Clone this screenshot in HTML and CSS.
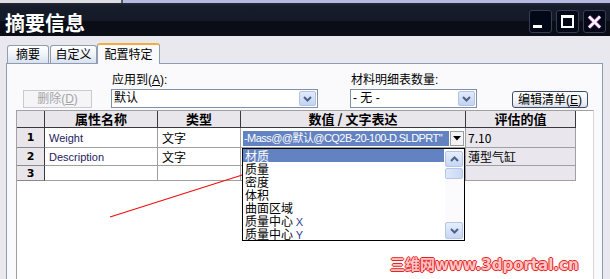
FILE: index.html
```html
<!DOCTYPE html>
<html lang="zh-CN">
<head>
    <meta charset="UTF-8">
    <title>摘要信息</title>
    <link rel="stylesheet" href="styles.css">
</head>
<body>
<div class="strip"><span class="strip-l"></span></div>
<div class="titlebar">
    <h1 class="title">摘要信息</h1>
    <div class="tb-btns">
        <span class="tb-btn min"><i class="ico-min"></i></span>
        <span class="tb-btn"><i class="ico-max"></i></span>
        <span class="tb-btn">
            <svg width="15" height="14" viewBox="0 0 15 14">
                <path d="M2 1.5L13 12.5M13 1.5L2 12.5" stroke="#c36bc8" stroke-width="3.6" fill="none"/>
                <path d="M2 1.5L13 12.5M13 1.5L2 12.5" stroke="#fff" stroke-width="2.4" fill="none"/>
            </svg>
        </span>
    </div>
</div>
<div class="tabs">
    <span class="tab t1">摘要</span>
    <span class="tab t2">自定义</span>
    <span class="tab t3 on">配置特定</span>
</div>
<div class="panel">
    <div class="opts">
        <button class="btn del" disabled>删除(<u>D</u>)</button>
        <div class="fld f1">
            <label>应用到(<u>A</u>):</label>
            <div class="combo"><span>默认</span><i class="drop"><svg width="9" height="6" viewBox="0 0 9 6"><path d="M1 1L4.5 4.5L8 1" stroke="#4d6185" stroke-width="2" fill="none"/></svg></i></div>
        </div>
        <div class="fld f2">
            <label>材料明细表数量:</label>
            <div class="combo"><span>- 无 -</span><i class="drop"><svg width="9" height="6" viewBox="0 0 9 6"><path d="M1 1L4.5 4.5L8 1" stroke="#4d6185" stroke-width="2" fill="none"/></svg></i></div>
        </div>
        <button class="btn edit">编辑清单(<u>E</u>)</button>
    </div>
    <div class="sheet">
        <div class="grid">
            <div class="hd"></div>
            <div class="hd">属性名称</div>
            <div class="hd">类型</div>
            <div class="hd">数值 / 文字表达</div>
            <div class="hd">评估的值</div>

            <div class="rh">1</div>
            <div class="c name">Weight</div>
            <div class="c">文字</div>
            <div class="c val">
                <div class="cell-combo">
                    <span class="sel">-Mass@@默认@CQ2B-20-100-D.SLDPRT"</span>
                    <i class="cell-drop"><svg width="8" height="5" viewBox="0 0 8 5"><path d="M0 0H8L4 4.5Z" fill="#000"/></svg></i>
                </div>
                <div class="list">
                    <ul class="items">
                        <li class="on">材质</li>
                        <li>质量</li>
                        <li>密度</li>
                        <li>体积</li>
                        <li>曲面区域</li>
                        <li>质量中心 <span class="ax">X</span></li>
                        <li>质量中心 <span class="ax">Y</span></li>
                    </ul>
                    <div class="vscroll">
                        <span class="sb-btn"><svg width="9" height="6" viewBox="0 0 9 6"><path d="M1 5L4.5 1.5L8 5" stroke="#4d6185" stroke-width="2" fill="none"/></svg></span>
                        <span class="sb-thumb"></span>
                        <span class="sb-btn down"><svg width="9" height="6" viewBox="0 0 9 6"><path d="M1 1L4.5 4.5L8 1" stroke="#4d6185" stroke-width="2" fill="none"/></svg></span>
                    </div>
                </div>
            </div>
            <div class="c ev">7.10</div>

            <div class="rh">2</div>
            <div class="c name">Description</div>
            <div class="c">文字</div>
            <div class="c"></div>
            <div class="c ev">薄型气缸</div>

            <div class="rh">3</div>
            <div class="c"></div>
            <div class="c"></div>
            <div class="c"></div>
            <div class="c ev"></div>
        </div>
    </div>
</div>

<svg class="arrow" width="610" height="279" viewBox="0 0 610 279">
    <path d="M110 217L247 173.5" stroke="#f01010" stroke-width="1.3" fill="none"/>
    <path d="M258 169L247.1 177.7L244.1 168.1Z" fill="#f01010"/>
</svg>
<div class="wm">三维网www.3dportal.cn</div>
</body>
</html>
```

FILE: styles.css
```css
body{
    margin: 0;
    width: 610px;
    height: 279px;
    overflow: hidden;
    position: relative;
    background: #e9e8ee;
    font-family: "Liberation Sans", "Noto Sans CJK SC", sans-serif;
    font-size: 12px;
    color: #000;
}
.strip{
    height: 3px;
    background: #b6bae2;
}
.strip-l{
    display: block;
    width: 121px;
    height: 3px;
    background: #dedee2;
    border-right: 2px solid #5a5a66;
}

/* title bar */
.titlebar{
    height: 33px;
    display: flex;
    justify-content: space-between;
    padding: 0 4px 0 5px;
    background: linear-gradient(#232a3a 0, #161c2a 3px, #141a28 55%, #0a0d15 55%);
}
.title{
    margin: 10px 0 0;
    font-family: "Noto Sans CJK SC", sans-serif;
    font-size: 20px;
    line-height: 20px;
    font-weight: bold;
    color: #fff;
}
.tb-btns{
    display: flex;
    gap: 4px;
    margin-top: 7px;
}
.tb-btn{
    box-sizing: border-box;
    width: 23px;
    height: 23px;
    border: 1px solid #363e50;
    border-radius: 3px;
    background: #030818;
    display: flex;
    align-items: center;
    justify-content: center;
}
.tb-btn.min{
    align-items: flex-end;
    justify-content: flex-start;
    padding: 0 0 4px 3px;
}
.ico-min{
    display: block;
    width: 9px;
    height: 3px;
    background: #fff;
}
.ico-max{
    display: block;
    box-sizing: border-box;
    width: 13px;
    height: 13px;
    border: 2px solid #fff;
    border-top-width: 3px;
}

/* tabs */
.tabs{
    display: flex;
    align-items: flex-end;
    height: 27px;
    padding-left: 7px;
}
.tab{
    box-sizing: border-box;
    height: 18px;
    border: 1px solid #919eb0;
    border-bottom: 0;
    border-radius: 3px 3px 0 0;
    text-align: center;
    line-height: 16px;
    font-family: "Noto Sans CJK SC", sans-serif;
    background: linear-gradient(#ffffff, #eef2f8 55%, #d6e0ef);
}
.t1{ width: 42px; margin-right: 1px; }
.t2{ width: 47px; }
.t3{ width: 63px; }
.tab.on{
    height: 21px;
    margin-bottom: -1px;
    position: relative;
    border-top: 2px solid #f2ae3c;
    line-height: 17px;
    background: #fafafc;
}

/* panel */
.panel{
    height: 260px;
    margin: 0 7px 0 6px;
    border: 1px solid #8e9bb1;
    background: #fafafc;
}
.opts{
    display: flex;
    align-items: flex-end;
    height: 44px;
}
.btn{
    box-sizing: border-box;
    padding: 0;
    font-family: "Liberation Sans", "Noto Sans CJK SC", sans-serif;
    font-size: 12px;
    line-height: 14px;
}
.del{
    width: 69px;
    height: 18px;
    margin-left: 16px;
    border: 1px solid #c9c9cf;
    background: #f5f5f7;
    color: #a4a4a8;
}
.edit{
    width: 76px;
    height: 17px;
    margin-left: 35px;
    border: 1px solid #3e4d6a;
    border-radius: 3px;
    background: linear-gradient(#ffffff, #eef0f4 70%, #d8dce6);
    color: #000;
}
.fld{
    display: flex;
    flex-direction: column;
}
.fld label{
    line-height: 14px;
    margin: 0 0 2px 1px;
}
.f1{ width: 207px; margin-left: 19px; }
.f2{ width: 127px; margin-left: 32px; }
.combo{
    box-sizing: border-box;
    height: 19px;
    display: flex;
    border: 1px solid #7f90a8;
    background: #fff;
}
.combo span{
    flex: 1;
    padding-left: 2px;
    line-height: 17px;
}
.drop{
    box-sizing: border-box;
    width: 17px;
    height: 15px;
    margin: 1px;
    display: flex;
    align-items: center;
    justify-content: center;
    border: 1px solid #b3c3e3;
    border-radius: 2px;
    background: linear-gradient(#e2eafa, #c3d3f3);
}

/* property sheet */
.sheet{
    box-sizing: border-box;
    width: 578px;
    height: 200px;
    margin: 2px 0 0 9px;
    border-left: 1px solid #a0a0a6;
    border-top: 1px solid #a0a0a6;
    border-right: 1px solid #d6d6dc;
    background: #fff;
}
.grid{
    display: grid;
    grid-template-columns: 28px 113px 83px 225px 110px;
    grid-template-rows: 17px 20px 18px 15px;
}
.grid > div{
    box-sizing: border-box;
    border-right: 1px solid #a0a0a0;
    border-bottom: 1px solid #a0a0a0;
}
.grid > .hd{
    background: #e8e6eb;
    border-right-color: #3a3a3a;
    border-bottom-color: #3a3a3a;
    font-family: "Noto Sans CJK SC", sans-serif;
    font-weight: bold;
    font-size: 13px;
    line-height: 16px;
    text-align: center;
}
.grid > .rh{
    background: #e8e6eb;
    border-right-color: #3a3a3a;
    border-bottom-color: #8a8a8a;
    font-family: "DejaVu Sans", sans-serif;
    font-weight: bold;
    font-size: 11px;
    display: flex;
    align-items: center;
    justify-content: center;
}
.c{
    display: flex;
    align-items: center;
    padding-left: 4px;
    font-family: "Noto Sans CJK SC", sans-serif;
    white-space: nowrap;
}
.c.name{
    font-family: "Liberation Sans", sans-serif;
    font-size: 11px;
    color: #23235e;
}
.c.ev{
    background: #e9e7ed;
    padding-left: 2px;
}
.c.val{
    position: relative;
    align-items: flex-start;
    padding: 3px 1px 0 2px;
}
.cell-combo{
    display: flex;
    width: 100%;
    height: 15px;
}
.sel{
    flex: 1;
    overflow: hidden;
    padding-left: 1px;
    background: #6382c2;
    color: #fff;
    font-family: "Liberation Sans", "Noto Sans CJK SC", sans-serif;
    font-size: 11px;
    letter-spacing: -0.55px;
    line-height: 15px;
}
.cell-drop{
    box-sizing: border-box;
    width: 14px;
    height: 15px;
    margin-left: 1px;
    display: flex;
    align-items: center;
    justify-content: center;
    border: 1px solid #9a9aa0;
    background: #f4f4f6;
}

/* open drop-down list */
.list{
    position: absolute;
    z-index: 2;
    top: 20px;
    left: 1px;
    box-sizing: border-box;
    width: 223px;
    height: 93px;
    display: flex;
    border: 1px solid #000;
    background: #fff;
}
.items{
    flex: 1;
    margin: 0;
    padding: 0;
    list-style: none;
}
.items li{
    height: 13px;
    line-height: 13px;
    padding-left: 2px;
    font-family: "Noto Sans CJK SC", sans-serif;
}
.items li.on{
    background: #6382c2;
    color: #fff;
}
.ax{
    font-family: "Liberation Sans", sans-serif;
    font-size: 11px;
    color: #2c3e94;
}
.vscroll{
    width: 18px;
    margin-left: 1px;
    padding: 2px 1px 1px 0;
    display: flex;
    flex-direction: column;
    background: #fbfbfd;
}
.sb-btn{
    box-sizing: border-box;
    height: 16px;
    display: flex;
    align-items: center;
    justify-content: center;
    border: 1px solid #b5c5e5;
    border-radius: 2px;
    background: linear-gradient(#e6eefc, #c6d6f4);
}
.sb-btn.down{
    height: 17px;
    margin-top: auto;
}
.sb-thumb{
    box-sizing: border-box;
    height: 11px;
    margin-top: 1px;
    border: 1px solid #b5c5e5;
    border-radius: 2px;
    background: linear-gradient(90deg, #dfe8fa, #c9d8f4);
}

/* annotation overlay */
.arrow{
    position: absolute;
    left: 0;
    top: 0;
    pointer-events: none;
}
.wm{
    position: absolute;
    left: 390px;
    top: 256px;
    font-family: "DejaVu Sans", "Noto Sans CJK SC", sans-serif;
    font-weight: bold;
    font-size: 15px;
    line-height: 18px;
    color: #ffc4c4;
    text-shadow: 1px 0 #e42424, -1px 0 #e42424, 0 1px #e42424, 0 -1px #e42424, 0 0 3px #ffd8d8;
    white-space: nowrap;
}
```
